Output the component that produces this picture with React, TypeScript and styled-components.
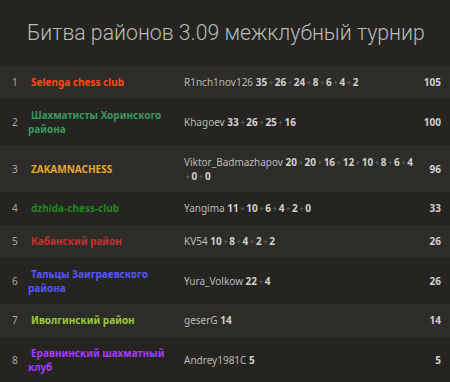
import styled, { createGlobalStyle } from 'styled-components';

const GlobalStyle = createGlobalStyle`
  html, body {
    margin: 0;
    padding: 0;
    background: #262421;
  }
  body {
    font-family: 'Noto Sans', 'Liberation Sans', sans-serif;
    color: #bababa;
  }
`;

const Page = styled.div`
  width: 450px;
  height: 382px;
  overflow: hidden;
  background: #262421;
`;

const Title = styled.h1`
  margin: 0;
  height: 66px;
  padding: 0 0 0 27px;
  box-sizing: border-box;
  font-family: Roboto, 'Liberation Sans', sans-serif;
  font-weight: 300;
  font-size: 21.25px;
  line-height: 66px;
  color: #bababa;
  white-space: nowrap;
`;

const Table = styled.table`
  width: 450px;
  table-layout: fixed;
  border-collapse: collapse;
  font-size: 10px;
  line-height: 14px;
`;

const Row = styled.tr<{ $odd: boolean }>`
  background: ${(p) => (p.$odd ? '#2e2c29' : '#262421')};
`;

const RankCell = styled.td`
  width: 16px;
  padding: 9.35px 0 9.35px 12px;
  color: #a8a8a8;
  vertical-align: middle;
`;

const TeamCell = styled.td<{ $color: string }>`
  width: 148px;
  padding: 9.35px 8px 9.35px 0;
  font-weight: 700;
  color: ${(p) => p.$color};
  vertical-align: middle;
`;

const TeamName = styled.span`
  padding-left: 3px;
`;

const PlayersCell = styled.td`
  width: 236px;
  padding: 9.35px 0;
  color: #bababa;
  vertical-align: middle;
`;

const Points = styled.strong`
  color: #d0d0d0;
  font-weight: 700;
`;

const Plus = styled.span`
  color: #6e6d6b;
  font-size: 8px;
  line-height: 0;
  font-weight: 400;
  margin: 0 1.5px;
`;

const ScoreCell = styled.td`
  width: 21px;
  padding: 9.35px 9px 9.35px 0;
  text-align: right;
  font-weight: 700;
  color: #d0d0d0;
  vertical-align: middle;
`;

type Team = {
  name: string;
  color: string;
  player: string;
  scores: number[];
};

const teams: Team[] = [
  { name: 'Selenga chess club', color: '#ff4a12', player: 'R1nch1nov126', scores: [35, 26, 24, 8, 6, 4, 2] },
  { name: 'Шахматисты Хоринского района', color: '#3a9a5e', player: 'Khagoev', scores: [33, 26, 25, 16] },
  { name: 'ZAKAMNACHESS', color: '#e8a82c', player: 'Viktor_Badmazhapov', scores: [20, 20, 16, 12, 10, 8, 6, 4, 0, 0] },
  { name: 'dzhida-chess-club', color: '#1f8a1f', player: 'Yangima', scores: [11, 10, 6, 4, 2, 0] },
  { name: 'Кабанский район', color: '#c8302c', player: 'KV54', scores: [10, 8, 4, 2, 2] },
  { name: 'Тальцы Заиграевского района', color: '#5757ff', player: 'Yura_Volkow', scores: [22, 4] },
  { name: 'Иволгинский район', color: '#9acd32', player: 'geserG', scores: [14] },
  { name: 'Еравнинский шахматный клуб', color: '#a63cff', player: 'Andrey1981C', scores: [5] },
];

function ScoreList({ scores }: { scores: number[] }) {
  return (
    <>
      {scores.map((s, i) => (
        <span key={i}>
          {i > 0 && (
            <>
              <wbr />
              <Plus>+</Plus>
            </>
          )}
          <Points>{s}</Points>
        </span>
      ))}
    </>
  );
}

export default function App() {
  return (
    <Page>
      <GlobalStyle />
      <Title>Битва районов 3.09 межклубный турнир</Title>
      <Table>
        <tbody>
          {teams.map((t, i) => (
            <Row key={t.name} $odd={i % 2 === 0}>
              <RankCell>{i + 1}</RankCell>
              <TeamCell $color={t.color}>
                <TeamName>{t.name}</TeamName>
              </TeamCell>
              <PlayersCell>
                {t.player} <ScoreList scores={t.scores} />
              </PlayersCell>
              <ScoreCell>{t.scores.reduce((a, b) => a + b, 0)}</ScoreCell>
            </Row>
          ))}
        </tbody>
      </Table>
    </Page>
  );
}
